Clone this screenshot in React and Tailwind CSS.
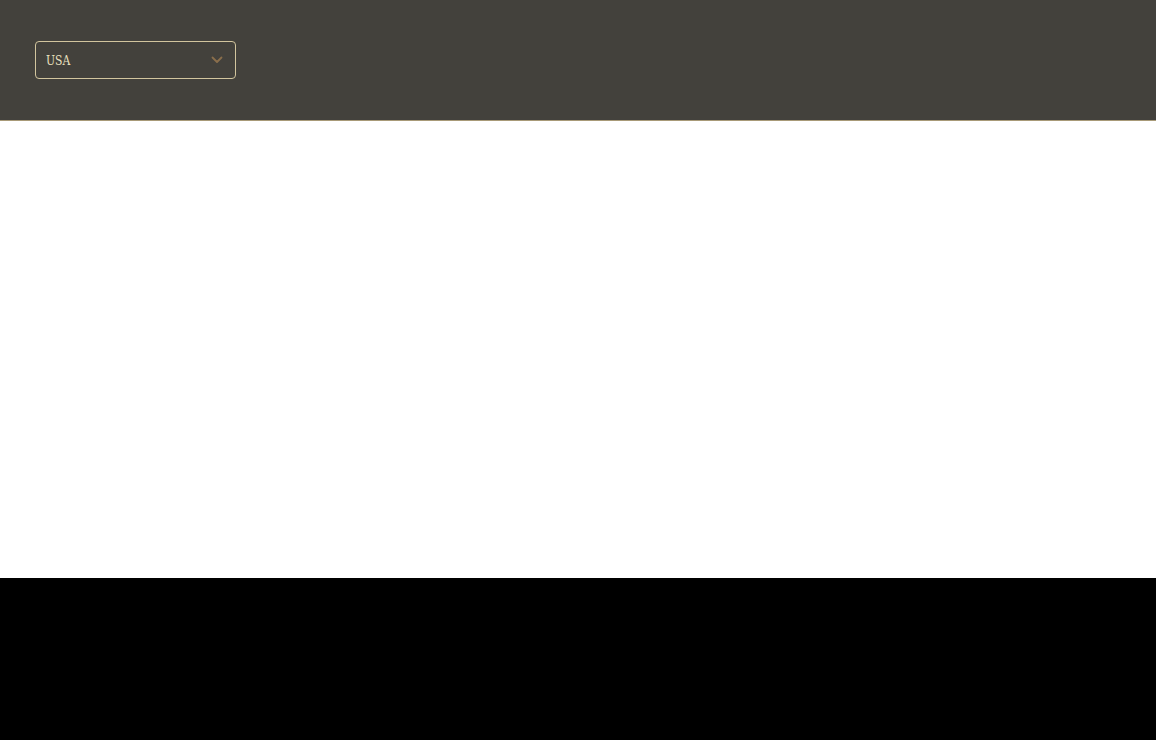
export default function App() {
  return (
    <div className="w-[1156px] h-[740px] flex flex-col bg-black">
      <header className="h-[121px] shrink-0 bg-[#43413c] border-b border-[#a89a78] pl-[35px] pt-[41px]">
        <div className="w-[201px] h-[38px] rounded-[4px] border border-[#d2c59e] flex items-center justify-between pl-[10px] pr-[12px]">
          <span className="text-[12px] leading-none text-[#ece2c0] font-[family-name:'DejaVu_Serif_Condensed','Liberation_Serif',serif] pt-[2px]">USA</span>
          <svg width="12" height="8" viewBox="0 0 12 8" fill="none">
            <path d="M1.5 1.5 L6 6 L10.5 1.5" stroke="#8a6e4b" strokeWidth="1.8" strokeLinecap="round" strokeLinejoin="round" />
          </svg>
        </div>
      </header>
      <main className="h-[457px] shrink-0 bg-white"></main>
      <footer className="flex-1 bg-black"></footer>
    </div>
  );
}
